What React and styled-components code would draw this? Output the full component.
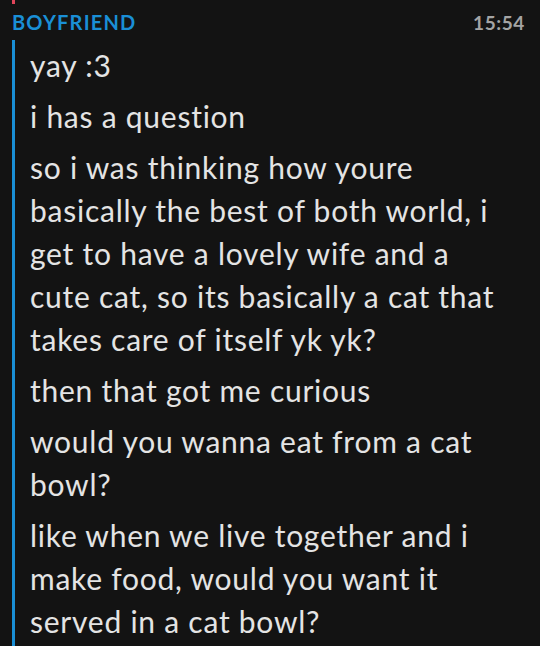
import React from 'react';
import styled, { createGlobalStyle } from 'styled-components';

const GlobalStyle = createGlobalStyle`
    html, body {
        margin: 0;
        padding: 0;
        background: #131313;
    }
    body {
        font-family: Lato, "Noto Sans", sans-serif;
        -webkit-font-smoothing: antialiased;
    }
`;

const messages = [
    ['yay :3'],
    ['i has a question'],
    [
        'so i was thinking how youre',
        'basically the best of both world, i',
        'get to have a lovely wife and a',
        'cute cat, so its basically a cat that',
        'takes care of itself yk yk?',
    ],
    ['then that got me curious'],
    ['would you wanna eat from a cat', 'bowl?'],
    [
        'like when we live together and i',
        'make food, would you want it',
        'served in a cat bowl?',
    ],
];

function App() {
    return (
        <ChatStyled>
            <GlobalStyle />
            <PrevTail />
            <Header>
                <Sender>BOYFRIEND</Sender>
                <Time>15:54</Time>
            </Header>
            <Thread>
                {messages.map((lines, i) => (
                    <Message key={i}>
                        {lines.map((line, j) => (
                            <Line key={j}>{line}</Line>
                        ))}
                    </Message>
                ))}
            </Thread>
        </ChatStyled>
    );
}

const ChatStyled = styled.div`
    width: 540px;
    height: 646px;
    overflow: hidden;
    background: #131313;
    color: #e4e4e4;
`;

const PrevTail = styled.div`
    height: 4px;
    margin-left: 12px;
    border-left: 3px solid #e0455a;
`;

const Header = styled.div`
    display: flex;
    justify-content: space-between;
    align-items: center;
    height: 36px;
    padding: 0 15px 0 12px;
`;

const Sender = styled.div`
    color: #1a8fd6;
    font-weight: 700;
    font-size: 20px;
    letter-spacing: 1.2px;
`;

const Time = styled.div`
    color: #a4a4a4;
    font-size: 19px;
    font-weight: 700;
    letter-spacing: 0.6px;
`;

const Thread = styled.div`
    margin: 0 0 0 12px;
    border-left: 3px solid #1a8fd6;
    padding-left: 15px;
`;

const Message = styled.div`
    padding: 4px 0;
`;

const Line = styled.div`
    font-size: 30px;
    line-height: 43px;
    letter-spacing: 0.75px;
    white-space: nowrap;
`;

export default App;
